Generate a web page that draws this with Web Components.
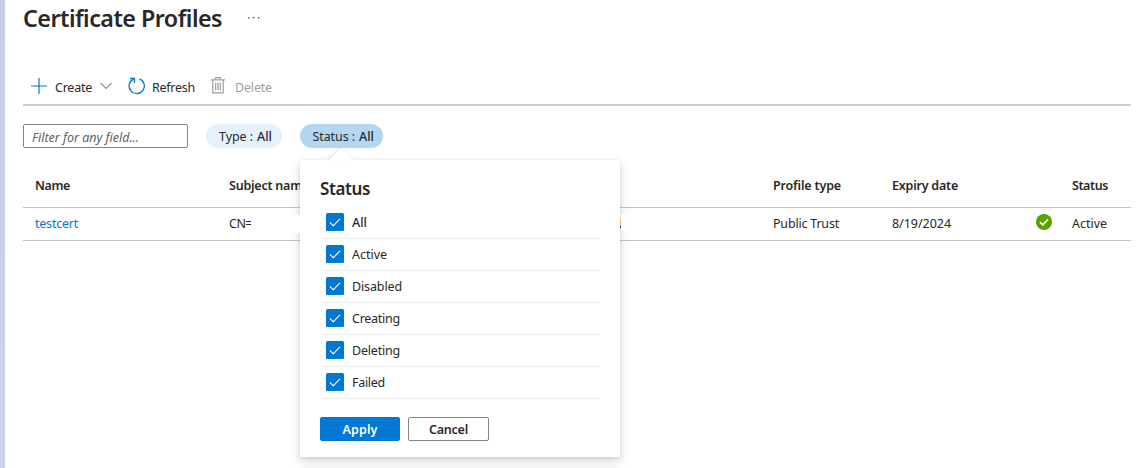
<!DOCTYPE html>
<html lang="en"><head><meta charset="utf-8"><title>Certificate Profiles</title>
<style>body{margin:0;background:#fff;overflow:hidden}</style></head>
<body><profiles-page></profiles-page>
<script>
const define=(name,html,setup)=>customElements.define(name,class extends HTMLElement{
  connectedCallback(){
    if(this.shadowRoot)return;
    this.attachShadow({mode:'open'}).innerHTML=html;
    if(setup)setup(this,this.shadowRoot);
  }
});

// A label that spaces its letters to take the width in its w attribute.
define('fit-text',`<style>:host{display:inline-block;white-space:pre}span{display:inline-block}</style><span><slot></slot></span>`,(el,r)=>{
  const w=+el.getAttribute('w'),s=r.querySelector('span');
  const n=s.getBoundingClientRect().width;
  s.style.letterSpacing=((w-n)/el.textContent.length)+'px';
  el.style.width=w+'px';
});

define('page-title',`<style>
:host{display:flex;height:36px;align-items:flex-start;color:#292827}
h1{margin:0;font-size:23.3px;line-height:36px;font-weight:580;height:36px}
svg{margin:17px 0 0 26px}
</style><h1><fit-text w="199">Certificate Profiles</fit-text></h1>
<svg width="12" height="2" fill="#605e5c"><rect x="0" width="1.4" height="1.4"/><rect x="5" width="1.4" height="1.4"/><rect x="10" width="1.4" height="1.4"/></svg>`);

define('command-bar',`<style>
:host{display:flex;box-sizing:border-box;height:70px;padding:33px 0 0 8px;align-items:center;border-bottom:2px solid #cfcece;width:1108px}
svg{display:block;flex:none;margin-top:-2px}.off{color:#a19f9d}
fit-text{padding-top:2px}
</style>
<svg width="16" height="16" fill="none" stroke="#0078d4" stroke-width="1.2"><path d="M8 0V16M0 8H16"/></svg>
<fit-text w="37" style="margin-left:8px">Create</fit-text>
<svg style="margin-left:8px" width="12" height="8" fill="none" stroke="#444" stroke-width="1"><path d="M.5 1L6 6.5L11.5 1"/></svg>
<svg style="margin-left:16px" width="18" height="18" fill="none" stroke="#0078d4" stroke-width="1.3"><path d="M11.5 1.9A7.6 7.6 0 1 1 5.5 2.1"/><path d="M2 1.5H6.5V6"/></svg>
<fit-text w="43" style="margin-left:6px">Refresh</fit-text>
<svg style="margin-left:16px" width="14" height="17" fill="none" stroke="#a19f9d" stroke-width="1.2"><path d="M0 2.8H14M4.5 2.8V.7H9.5V2.8M1.8 3V15.8H12.2V3M4.7 5.5V13.2M7 5.5V13.2M9.3 5.5V13.2"/></svg>
<fit-text class="off" w="37" style="margin-left:10px">Delete</fit-text>`);

define('filter-pill',`<style>
:host{display:flex;box-sizing:border-box;height:24px;border-radius:12px;background:#e5f1fb;align-items:center;padding:2px 0 0 13px;width:76px}
:host([open]){background:#b3d6f2;width:83px;padding-left:12.5px}
b{font-weight:550;margin-left:4px}
</style><slot></slot><b><fit-text w="15">All</fit-text></b>`);

define('filter-bar',`<style>
:host{display:flex;padding-top:18px;align-items:center;height:24px}
.in{box-sizing:border-box;width:165px;height:24px;border:1px solid #858381;border-radius:2px;padding:3px 0 0 8px;font-style:italic;color:#605e5c;display:flex;align-items:center;margin-right:18px}
filter-pill+filter-pill{margin-left:18px}
</style><div class="in"><fit-text w="107">Filter for any field...</fit-text></div>
<filter-pill><fit-text w="34">Type :</fit-text></filter-pill>
<filter-pill open><fit-text w="42.5">Status :</fit-text></filter-pill>`);

define('profile-row',`<style>
:host{display:grid;grid-template-columns:194px 544px 119px 144px 36px 59px;box-sizing:border-box;width:1108px;height:33px;padding-left:12px;align-items:center;border-bottom:1px solid #c8c6c4}
:host([head]){height:60px;font-weight:560;padding-top:17px}
</style><slot></slot>`);

define('profile-table',`<style>
:host{display:block}a{color:#0078d4}svg{display:block;margin-top:-4px}
</style>
<profile-row head><fit-text w="35">Name</fit-text><fit-text w="80">Subject name</fit-text><fit-text w="68">Profile type</fit-text><fit-text w="66">Expiry date</fit-text><span></span><fit-text w="36">Status</fit-text></profile-row>
<profile-row><a><fit-text w="43">testcert</fit-text></a><fit-text w="23">CN=</fit-text><fit-text w="66">Public Trust</fit-text><fit-text w="59">8/19/2024</fit-text>
<svg width="16" height="16"><circle cx="8" cy="8" r="8" fill="#57a300"/><path d="M4 8.2L6.8 10.8L12 5.4" fill="none" stroke="#fff" stroke-width="1.6"/></svg>
<fit-text w="35">Active</fit-text></profile-row>`);

define('check-item',`<style>
:host{display:flex;box-sizing:border-box;height:32px;width:278px;margin-left:2px;padding-left:4px;align-items:center;border-bottom:1px solid #edebe9}
svg{display:block;margin:-1px 8px 0 0}
</style><svg width="18" height="18"><rect width="18" height="18" rx="1.5" fill="#0078d4"/><path d="M4 9.5L7.3 12.8L14 5.8" fill="none" stroke="#fff" stroke-width="1.1"/></svg><slot></slot>`);

define('action-button',`<style>
:host{display:flex;box-sizing:border-box;width:81px;height:24px;border:1px solid #858381;border-radius:2px;padding-top:2px;align-items:center;justify-content:center;font-weight:560}
:host([primary]){width:80px;background:#0078d4;border-color:#0078d4;color:#fff;font-weight:600}
</style><slot></slot>`);

define('status-popup',`<style>
:host{position:absolute;left:300px;top:160px;box-sizing:border-box;width:320px;height:297px;padding:19px 20px 0;background:#fff;border-radius:2px;box-shadow:0 6px 14px rgba(0,0,0,.13),0 1px 4px rgba(0,0,0,.13)}
.tip{position:absolute;left:29px;top:-12px;filter:drop-shadow(-1px -1px 1.5px rgba(0,0,0,.1))}
h2{margin:0;font-size:17px;line-height:20px;font-weight:580;height:28px}
.b{display:flex;gap:8px;padding-top:18px}
</style><svg class="tip" width="24" height="13"><path d="M0 12L12 0L24 12V13H0Z" fill="#fff"/></svg>
<h2><fit-text w="50">Status</fit-text></h2>
<check-item><fit-text w="15" style="font-weight:500">All</fit-text></check-item>
<check-item><fit-text w="35">Active</fit-text></check-item>
<check-item><fit-text w="50">Disabled</fit-text></check-item>
<check-item><fit-text w="48">Creating</fit-text></check-item>
<check-item><fit-text w="48">Deleting</fit-text></check-item>
<check-item><fit-text w="33">Failed</fit-text></check-item>
<div class="b"><action-button primary><fit-text w="35">Apply</fit-text></action-button><action-button><fit-text w="39">Cancel</fit-text></action-button></div>`);

define('profiles-page',`<style>
:host{display:flex;position:relative;width:1140px;height:468px;overflow:hidden;background:#fff;color:#292827;font:12.5px/18px "Noto Sans","Open Sans",sans-serif}
aside{width:5px;background:linear-gradient(#c5cfe2,#cbd5e8)}
main{padding-left:18px}
.mask{position:absolute;left:251px;top:215px;width:49px;height:18px;background:#fff}
.mask.r{left:621px;top:214px;width:9px;height:17px}
.edge{position:absolute;left:620px;top:219px;width:1px;height:9px;background:linear-gradient(#efaf60 7px,#4c2b36 7px)}
</style><aside></aside><main><page-title></page-title><command-bar></command-bar><filter-bar></filter-bar><profile-table></profile-table></main>
<status-popup></status-popup><div class="mask"></div><div class="mask r"></div><div class="edge"></div>`);
</script></body></html>
